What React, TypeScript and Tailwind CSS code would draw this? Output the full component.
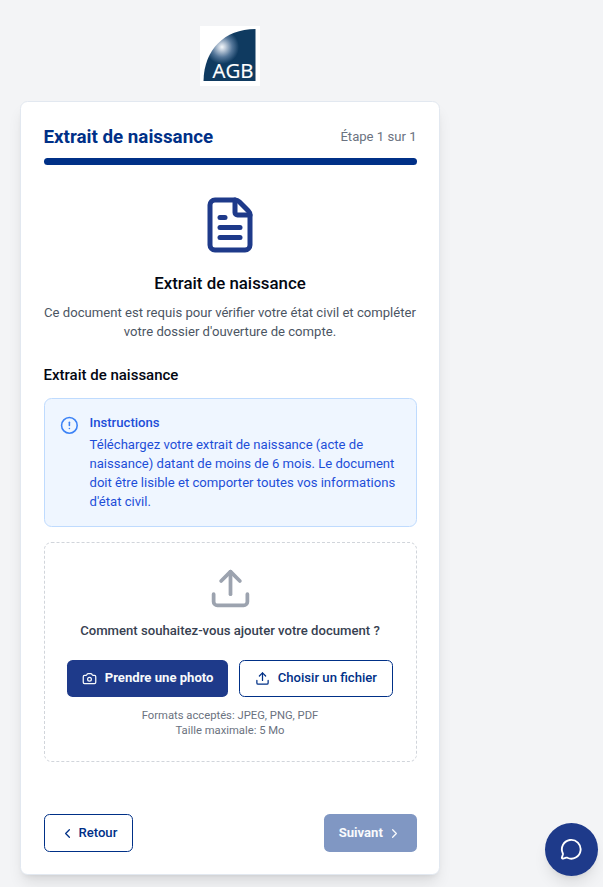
import React from "react";
import { Camera, ChevronLeft, ChevronRight, CircleAlert, FileText, MessageCircle, Upload } from "lucide-react";

function Logo() {
  return (
    <svg width="60" height="60" viewBox="0 0 60 60" role="img" aria-label="AGB" className="block">
      <defs>
        <radialGradient id="shine" gradientUnits="userSpaceOnUse" cx="22" cy="21" r="17">
          <stop offset="0" stopColor="#f4f8fb" />
          <stop offset="0.2" stopColor="#c3cfdd" />
          <stop offset="0.6" stopColor="#55779a" />
          <stop offset="1" stopColor="#0f3a60" />
        </radialGradient>
      </defs>
      <rect width="60" height="60" fill="#fff" />
      <path d="M55.500 3V55H3.500C4 24 24 3 55.500 3Z" fill="url(#shine)" />
      <text x="12.500" y="51.500" fontFamily="'Open Sans', 'Noto Sans', sans-serif" fontSize="20.500" textLength="41" lengthAdjust="spacingAndGlyphs" fill="#fff" stroke="#fff" strokeWidth="0.2">AGB</text>
    </svg>
  );
}

export default function App() {
  return (
    <div className="relative h-[887px] w-full overflow-hidden bg-[#f3f4f6] font-['Roboto',sans-serif] text-[13.125px] leading-[18.75px] text-[#030712]">
      <div className="flex w-[460px] flex-col items-center pt-[26px]">
        <Logo />
        <main className="mt-[15px] flex h-[774px] w-[420px] flex-col rounded-[7.500px] border border-[#e2e8f0] bg-white p-[22.500px] shadow-[0_10px_15px_-3px_rgb(0_0_0/0.1),0_4px_6px_-4px_rgb(0_0_0/0.1)]">
          <header className="flex items-center justify-between">
            <h1 className="-mt-px mb-px text-[18.750px] leading-[26.250px] font-bold text-[#003087]">Extrait de naissance</h1>
            <span className="text-[#6b7280]">Étape 1 sur 1</span>
          </header>
          <div className="mt-[7.500px] h-[7px] shrink-0 rounded-full bg-[#003087]" />

          <section className="mt-[30px] flex flex-col items-center text-center">
            <FileText className="size-[60px] text-[#1e3a8a]" />
            <h2 className="mt-[15px] text-[16.875px] leading-[26.250px] font-medium">Extrait de naissance</h2>
            <p className="mt-[7.500px] text-[#4b5563]">
              Ce document est requis pour vérifier votre état civil et compléter votre dossier d'ouverture de compte.
            </p>
          </section>

          <h3 className="mt-[22.500px] text-[15px] leading-[22.500px] font-medium">Extrait de naissance</h3>

          <section className="mt-[11.250px] flex gap-[11.250px] rounded-[7.500px] border border-[#bfdbfe] bg-[#eff6ff] p-[15px] text-[#1d4ed8]">
            <CircleAlert className="mt-[2px] size-[18.750px] shrink-0 text-[#3b82f6]" />
            <div>
              <h4 className="font-medium">Instructions</h4>
              <p className="mt-[3.750px]">
                Téléchargez votre extrait de naissance (acte de naissance) datant de moins de 6 mois. Le document doit être lisible et comporter toutes vos informations d'état civil.
              </p>
            </div>
          </section>

          <section className="mt-[15px] flex flex-col items-center rounded-[7.500px] border border-dashed border-[#d1d5db] py-[22.500px]">
            <Upload className="size-[45px] text-[#9ca3af]" />
            <p className="mt-[11.250px] font-medium text-[#374151]">Comment souhaitez-vous ajouter votre document ?</p>
            <div className="mt-[18.750px] flex gap-[11.250px]">
              <button className="flex h-[37.500px] w-[161px] items-center justify-center gap-[7.500px] rounded-[5.600px] bg-[#1e3a8a] pl-[1px] font-bold text-[#f8fafc]">
                <Camera className="size-[15px]" />Prendre une photo
              </button>
              <button className="flex h-[37.500px] w-[154px] items-center justify-center gap-[7.500px] rounded-[5.600px] border border-[#003087] font-medium text-[#003087]">
                <Upload className="size-[15px]" />Choisir un fichier
              </button>
            </div>
            <p className="mt-[11.250px] text-center text-[11.250px] leading-[15px] text-[#6b7280]">Formats acceptés: JPEG, PNG, PDF<br />Taille maximale: 5 Mo</p>
          </section>

          <footer className="mt-auto flex justify-between">
            <button className="flex h-[37.500px] w-[89px] items-center justify-center gap-[3.750px] rounded-[5.600px] border border-[#003087] pt-[1px] pl-[1px] font-medium text-[#003087]">
              <ChevronLeft className="size-[15px]" />Retour
            </button>
            <button className="flex h-[37.500px] w-[93px] items-center justify-center gap-[4px] rounded-[5.600px] bg-[#8097c3] pt-[1px] pl-[0.5px] font-bold text-[#f8fafc]">
              Suivant<ChevronRight className="size-[15px]" />
            </button>
          </footer>
        </main>
      </div>
      <button aria-label="Chat" className="absolute right-[5px] bottom-[11px] flex size-[53px] items-center justify-center rounded-full bg-[#1e3a8a] text-white shadow-[0_10px_15px_-3px_rgb(0_0_0/0.1),0_4px_6px_-4px_rgb(0_0_0/0.1)]">
        <MessageCircle className="size-[22.500px]" />
      </button>
    </div>
  );
}
